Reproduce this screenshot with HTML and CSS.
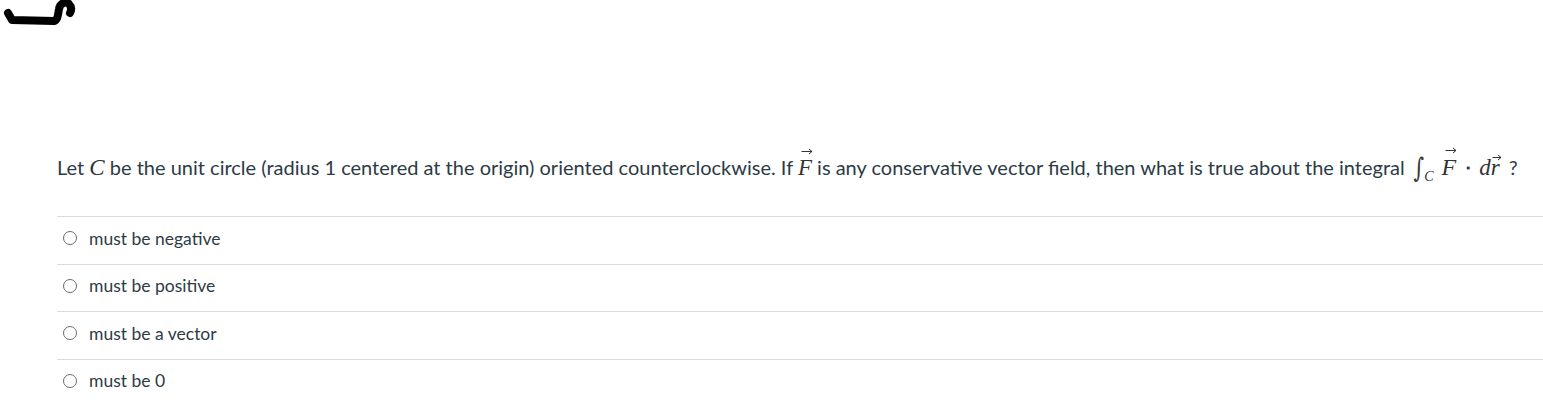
FILE: index.html
```html
<!DOCTYPE html>
<html>
<head>
<meta charset="utf-8">
<link rel="stylesheet" href="styles.css">
</head>
<body>
<div class="scribble">
<svg width="80" height="30" viewBox="0 0 80 30"><path d="M8 13 L12 20 L54 21 C58 20 58 14 59 9 C60 3 66 1 69 4 C72 7 71 11 70 13" fill="none" stroke="#000" stroke-width="8" stroke-linecap="round" stroke-linejoin="round"/></svg>
</div>
<div class="question">
<p class="prompt">Let <span class="mi">C</span> be the unit circle (radius 1 centered at the origin) oriented counterclockwise. If <span class="vec"><span class="mi">F</span><svg class="arrow" width="12" height="7" viewBox="0 0 12 7"><path d="M0.5 3.5 H11 M8 1 L11 3.5 L8 6" fill="none" stroke="#333" stroke-width="1"/></svg></span> is any conservative vector field, then what is true about the integral <span class="math"><span class="int">&#8747;</span><span class="sub mi">C</span><span class="vec big"><span class="mi">F</span><svg class="arrow" width="12" height="7" viewBox="0 0 12 7"><path d="M0.5 3.5 H11 M8 1 L11 3.5 L8 6" fill="none" stroke="#333" stroke-width="1"/></svg></span><span class="dot">&#8901;</span><span class="mi">d</span><span class="vec"><span class="mi">r</span><svg class="arrow r" width="10" height="7" viewBox="0 0 10 7"><path d="M0.5 3.5 H9 M6 1 L9 3.5 L6 6" fill="none" stroke="#333" stroke-width="1"/></svg></span></span><span class="q">?</span></p>
<ul class="answers">
<li class="answer"><span class="radio"></span><span>must be negative</span></li>
<li class="answer"><span class="radio"></span><span>must be positive</span></li>
<li class="answer"><span class="radio"></span><span>must be a vector</span></li>
<li class="answer"><span class="radio"></span><span>must be 0</span></li>
</ul>
</div>
</body>
</html>
```
FILE: styles.css
```css
html, body { margin: 0; padding: 0; background: #fff; }
body { font-family: Lato, "Noto Sans", sans-serif; color: #2d3b45; }
.scribble { height: 30px; }
.scribble svg { display: block; }
.question { padding: 118px 0 0 57px; }
.prompt { margin: 0; font-size: 20px; line-height: 38px; height: 68px; white-space: nowrap; }
.mi { font-family: "Liberation Serif", "DejaVu Serif", serif; font-style: italic; font-size: 23px; color: #333; }
.vec { position: relative; display: inline-block; line-height: 1; }
.vec.big .mi { font-size: 24px; }
.vec .arrow { position: absolute; left: 3px; top: -8px; }
.vec .arrow.r { left: 1px; top: -2px; }
.math { white-space: nowrap; margin-left: 4px; }
.int { font-family: "DejaVu Serif", serif; font-size: 20px; display: inline-block; transform: scaleY(1.35); color: #333; }
.sub { font-size: 14px; position: relative; top: 6px; margin-right: 8px; }
.dot { font-weight: bold; margin: 0 8px 0 9px; color: #333; }
.q { margin-left: 9px; }
.answers { list-style: none; margin: 0; padding: 0; }
.answer { display: flex; align-items: center; gap: 12px; box-sizing: border-box; height: 47.5px; padding-bottom: 4px; border-top: 1px solid #dadcde; padding-left: 6px; font-size: 17.5px; }
.radio { width: 12px; height: 12px; border: 1px solid #6b6b6b; border-radius: 50%; box-sizing: content-box; }
```
